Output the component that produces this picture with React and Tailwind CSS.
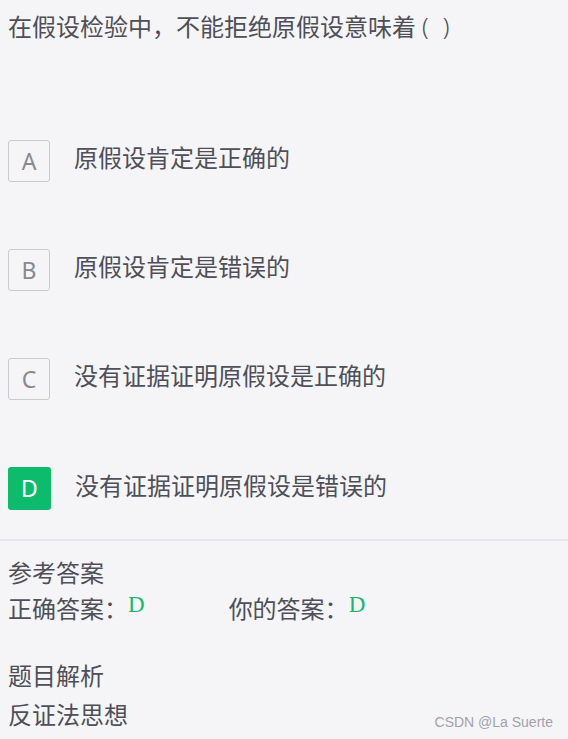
import React from "react";

const cjk = { fontFamily: '"Microsoft YaHei", "Noto Sans CJK SC", "Noto Sans", sans-serif' };
const latin = { fontFamily: '"Noto Sans", "Open Sans", sans-serif' };

function Option({ letter, text, active }) {
  return (
    <div className="flex items-center">
      <div
        className={
          active
            ? "w-[43px] h-[43px] rounded-[3px] bg-[#0cbc6c] text-white flex items-center justify-center text-[23px]"
            : "w-[42px] h-[42px] rounded-[3px] border border-[#c9c9d0] text-[#88888f] flex items-center justify-center text-[23px]"
        }
        style={latin}
      >
        {letter}
      </div>
      <div className="ml-[24px] pb-[8px] text-[24px] leading-[32px] text-[#4e4f57]" style={cjk}>
        {text}
      </div>
    </div>
  );
}

export default function App() {
  return (
    <div className="relative w-[568px] h-[739px] bg-[#f5f5f7] overflow-hidden">
      <div className="px-[8px] pt-[10px]">
        <div className="flex items-center text-[24px] leading-[32px] text-[#4e4f57] whitespace-nowrap" style={cjk}>
          <span>在假设检验中，不能拒绝原假设意味着</span>
          <span className="ml-[6px] font-light" style={latin}>(</span>
          <span className="ml-[14px] font-light" style={latin}>)</span>
        </div>
        <div className="mt-[98px] flex flex-col gap-[67px]">
          <Option letter="A" text="原假设肯定是正确的" />
          <Option letter="B" text="原假设肯定是错误的" />
          <Option letter="C" text="没有证据证明原假设是正确的" />
          <Option letter="D" text="没有证据证明原假设是错误的" active />
        </div>
      </div>
      <div className="mt-[29px] h-[2px] bg-[#e7e7ee]" />
      <div className="px-[8px] mt-[13px] text-[24px] text-[#4e4f57]" style={cjk}>
        <div className="leading-[36px]">参考答案</div>
        <div className="leading-[36px] flex items-start">
          <span>正确答案：</span>
          <span
            className="text-[#16b96d] text-[23px] leading-[30px]"
            style={{ fontFamily: '"Liberation Serif", "Times New Roman", serif' }}
          >
            D
          </span>
          <span className="ml-[84px]">你的答案：</span>
          <span
            className="text-[#16b96d] text-[23px] leading-[30px]"
            style={{ fontFamily: '"Liberation Serif", "Times New Roman", serif' }}
          >
            D
          </span>
        </div>
        <div className="mt-[29px] leading-[39px]">题目解析</div>
        <div className="leading-[39px]">反证法思想</div>
      </div>
      <div
        className="absolute right-[15px] bottom-[8px] text-[14px] text-[#a2a2aa] leading-[18px]"
        style={{ fontFamily: '"Liberation Sans", Arial, sans-serif' }}
      >
        CSDN @La Suerte
      </div>
    </div>
  );
}
